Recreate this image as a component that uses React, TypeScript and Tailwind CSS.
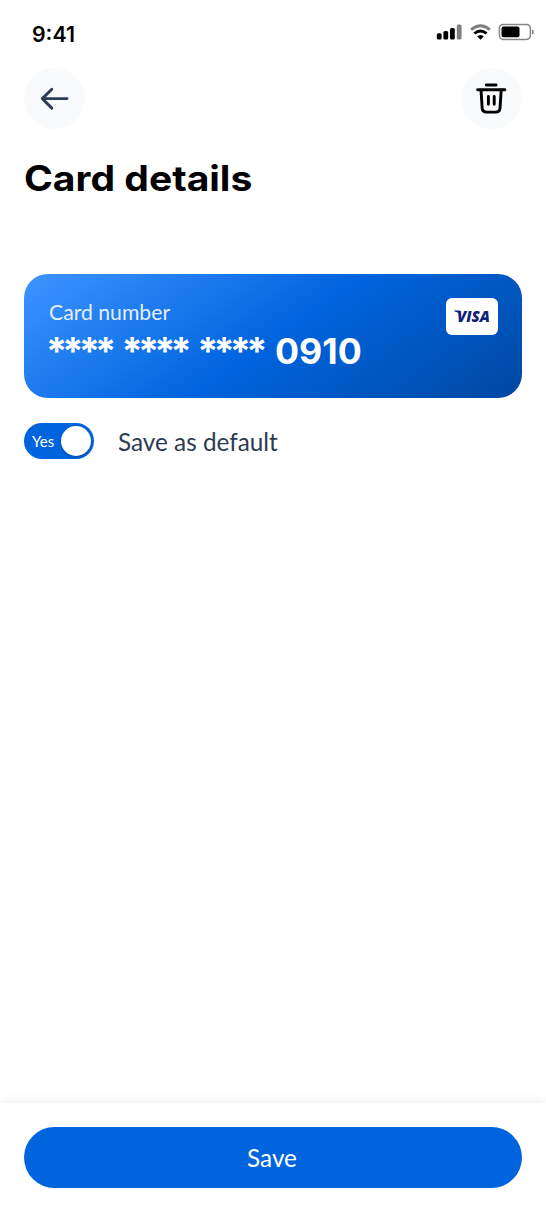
import { useState } from 'react';

const BackIcon = () => (
  <svg width="30" height="24" viewBox="0 0 30 24" fill="none" stroke="#2d3b55" strokeWidth="2.9" strokeLinecap="round" strokeLinejoin="round">
    <path d="M27 11.6H2.3M11.8 2.2L2.3 11.6l9.5 9.5" />
  </svg>
);

const TrashIcon = () => (
  <svg width="32" height="32" viewBox="0 0 32 32" fill="none" stroke="#000" strokeWidth="2.9" strokeLinecap="round" strokeLinejoin="round">
    <path d="M10.3 2h9.8M1.6 6.7h27.3" />
    <path d="M5 7.2l1.2 18.2q.4 3.7 4.1 3.7h9.6q3.7 0 4.1-3.7l1.2-18.2" />
    <path d="M12.4 13.4v7.9M18.2 13.4v7.9" />
  </svg>
);

const StatusIcons = () => (
  <svg width="100" height="20" viewBox="0 0 100 20">
    <rect x="0.8" y="12.2" width="4.8" height="6.4" rx="1.5" />
    <rect x="7.4" y="10.1" width="4.8" height="8.5" rx="1.5" />
    <rect x="14" y="7" width="4.8" height="11.6" rx="1.5" />
    <rect x="20.8" y="3.4" width="4.8" height="15.2" rx="1.5" fill="#808080" />
    <path d="M35.1 8.6Q44.5 0.8 53.9 8.6" fill="none" stroke="#808080" strokeWidth="2.8" />
    <path d="M38.4 12.5Q44.5 7.4 50.6 12.5" fill="none" stroke="#000" strokeWidth="2.8" />
    <path d="M41.2 15.5Q44.5 12.4 47.8 15.5L44.5 18.8Z" />
    <rect x="63.4" y="3.4" width="31" height="15" rx="3.8" fill="none" stroke="#868686" strokeWidth="1.5" />
    <rect x="65.5" y="5.6" width="18" height="10.6" rx="2" />
    <path d="M96 8.3q1.9.5 1.9 2.7t-1.9 2.7z" fill="#868686" />
  </svg>
);

const VisaBadge = () => (
  <div className="flex h-[37px] w-[52px] items-center justify-center rounded-md bg-white">
    <svg width="44" height="28" viewBox="0 0 44 28">
      <path d="M4.2 7.6h4.6q1.5 0 1.8 1.4l.7 3.4Q8.4 9 4.2 8.3z" fill="#10207c" />
      <text x="7" y="19.3" textLength="32.8" lengthAdjust="spacingAndGlyphs" fill="#10207c" fontFamily="Open Sans, sans-serif" fontSize="16.5" fontWeight="800" fontStyle="italic">
        VISA
      </text>
    </svg>
  </div>
);

const App = () => {
  const [isDefault, setIsDefault] = useState(true);

  return (
    <div className="flex h-[1212px] w-[546px] flex-col overflow-hidden bg-white font-['Lato',sans-serif]">
      {/* Status bar */}
      <div className="flex h-[68px] shrink-0 justify-between pr-[10px] pl-[32px]">
        <span className="mt-[20px] origin-left font-['Inter',sans-serif] text-[21.3px] leading-[28px] font-semibold">
          9:41
        </span>
        <div className="mt-[21px]">
          <StatusIcons />
        </div>
      </div>

      <main className="flex-1 px-6">
        <div className="flex justify-between">
          <button aria-label="Back" className="flex size-[61px] items-center justify-center rounded-full bg-[#f8fafc]">
            <BackIcon />
          </button>
          <button aria-label="Delete card" className="flex size-[61px] items-center justify-center rounded-full bg-[#f8fafc]">
            <TrashIcon />
          </button>
        </div>

        <h1 className="mt-[26px] w-max origin-left scale-x-[1.115] font-['Inter',sans-serif] text-[35px] leading-[46px] font-bold">
          Card details
        </h1>

        {/* Card */}
        <section className="mt-[73px] flex h-[124.4px] justify-between rounded-3xl bg-[linear-gradient(145deg,#3d94ff_0%,#0064de_51%,#0048a1_100%)] pt-6 pr-6 pl-[25px] text-white">
          <div>
            <p className="text-[21.2px] leading-[28px] text-[#e4efff]">Card number</p>
            <div className="flex pt-[2px] font-['Inter',sans-serif] text-[35px] leading-[46px] font-bold">
              <span className="-ml-[3px] w-[229px] text-[38px] tracking-[-4.9px] whitespace-nowrap [word-spacing:6.1px]">
                **** **** ****
              </span>
              <span className="origin-left scale-x-[1.02]">0910</span>
            </div>
          </div>
          <VisaBadge />
        </section>

        <div className="mt-[24.2px] flex items-center gap-6">
          <button
            role="switch"
            aria-checked={isDefault}
            onClick={() => setIsDefault(!isDefault)}
            className={`flex h-[36.5px] w-[70px] items-center justify-between rounded-full pr-[3px] pl-[8px] ${
              isDefault ? 'bg-[#0064de]' : 'flex-row-reverse bg-gray-400'
            }`}
          >
            <span className="text-[15px] text-white">{isDefault ? 'Yes' : 'No'}</span>
            <span className="size-[30.5px] rounded-full bg-white shadow-[0_1px_3px_rgba(0,0,0,0.25)]" />
          </button>
          <span className="pt-px text-[24.3px] leading-[36px] text-[#2d3b50]">Save as default</span>
        </div>
      </main>

      {/* Bottom action */}
      <footer className="h-[109px] shrink-0 bg-white px-6 pt-6 shadow-[0_0_12px_rgba(0,0,0,0.08)]">
        <button className="h-[61px] w-full rounded-full bg-[#0064de] pt-[2px] pr-[2px] text-[24.3px] text-white">Save</button>
      </footer>
    </div>
  );
};

export default App;
